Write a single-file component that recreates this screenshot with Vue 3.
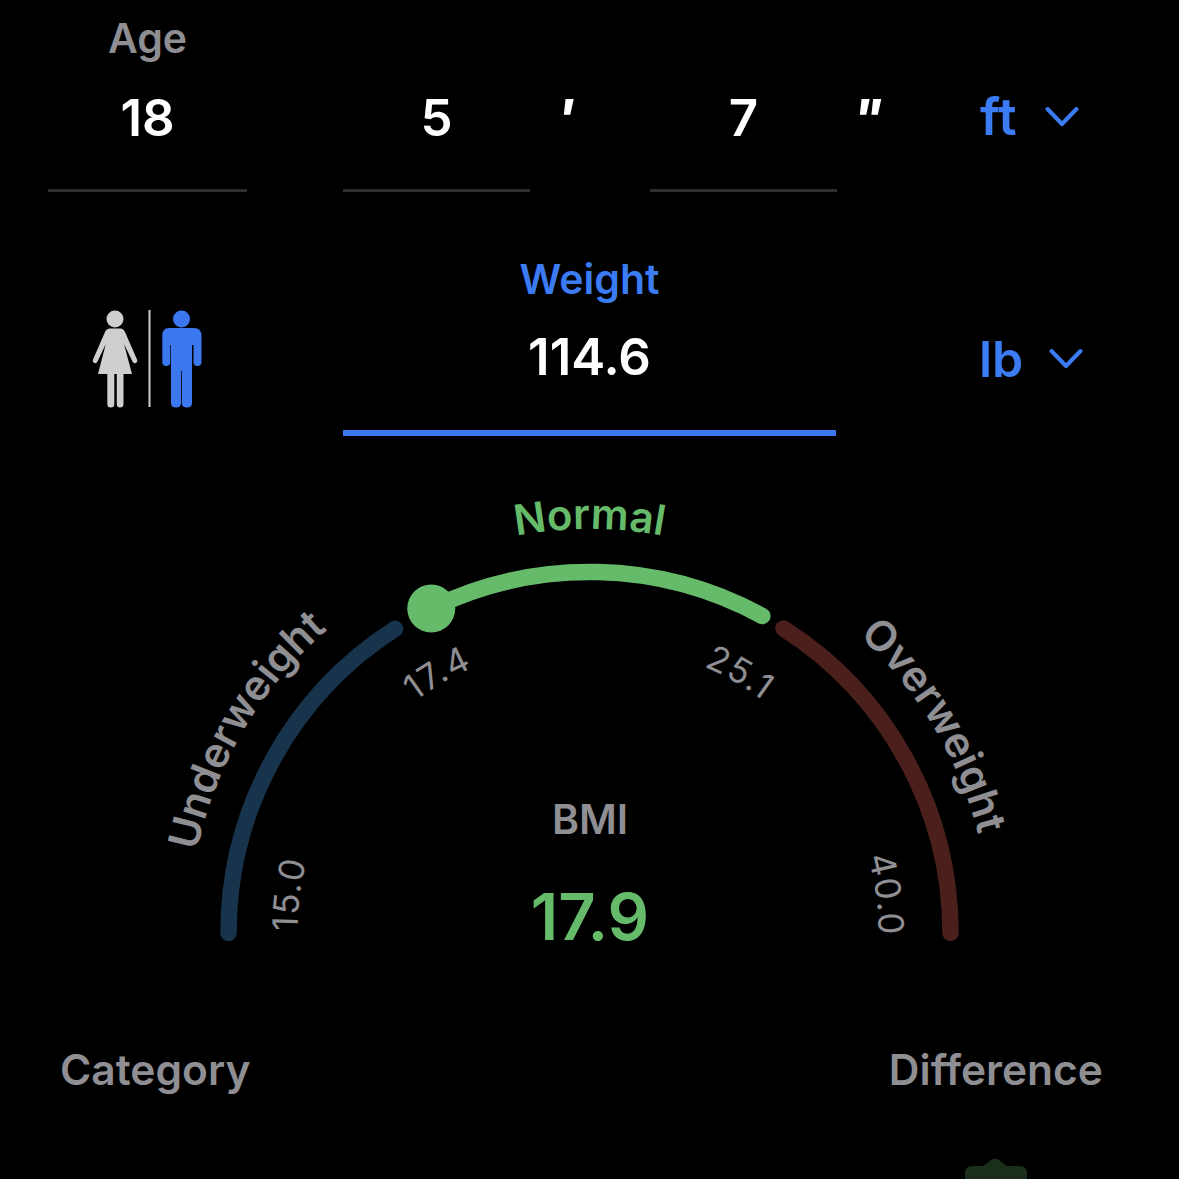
<template>
  <div class="screen">
    <div class="row row-height">
      <div class="field age">
        <span class="label">Age</span>
        <span class="value">18</span>
      </div>
      <div class="field feet">
        <span class="value">5</span>
      </div>
      <span class="mark prime">'</span>
      <div class="field inches">
        <span class="value">7</span>
      </div>
      <span class="mark double">"</span>
      <div class="unit">
        <span>ft</span>
        <svg width="34" height="22" viewBox="0 0 34 22"><path d="M2.5 3 17 18 31.500 3" fill="none" stroke="#3b7cf4" stroke-width="4" stroke-linecap="round" stroke-linejoin="round" /></svg>
      </div>
    </div>

    <div class="row row-weight">
      <div class="gender">
        <svg width="115" height="105" viewBox="90 305 115 105">
          <circle cx="115" cy="319" r="8.500" fill="#cfcfcf" />
          <path fill="#cfcfcf" d="M110 328.500H120.500Q123.500 328.500 125 332L137 359.500Q138 362 135.500 363Q133.500 363.800 132.500 361.500L124 344L132 374H123.500V404Q123.500 407.500 120 407.500Q116.800 407.500 116.800 404V374H114.300V404Q114.300 407.500 110.800 407.500Q107.300 407.500 107.300 404V374H98L105.800 344L97.500 361.500Q96.500 363.800 94.500 363Q92.200 362 93 359.500L105 332Q106.500 328.500 110 328.500Z" />
          <rect x="148.500" y="310" width="2" height="97" fill="#cfcfcf" />
          <circle cx="181.500" cy="319" r="8.500" fill="#3b78f0" />
          <path fill="#3b78f0" d="M169 328H194Q201.500 328 201.500 336V362Q201.500 366 197.500 366Q193.500 366 193.500 362V345H192V403Q192 407.500 187 407.500Q182 407.500 181.800 403V371H181V403Q181 407.500 176 407.500Q171 407.500 171 403V345H170.300V362Q170.300 366 166.300 366Q162.300 366 162.300 362V336Q162.300 328 169 328Z" />
        </svg>
      </div>
      <div class="field weight">
        <span class="label active">Weight</span>
        <span class="value">114.6</span>
      </div>
      <div class="unit unit-lb">
        <span>lb</span>
        <svg width="34" height="22" viewBox="0 0 34 22"><path d="M2.5 3 17 18 31.500 3" fill="none" stroke="#3b7cf4" stroke-width="4" stroke-linecap="round" stroke-linejoin="round" /></svg>
      </div>
    </div>

    <svg class="gauge" width="1179" height="520" viewBox="0 480 1179 520">
      <defs>
        <path v-for="t in pathsForText" :id="t.id" :key="t.id" :d="arc(t.r, t.from, t.to)" fill="none" />
      </defs>
      <path :d="arc(R, 180, 122.6)" class="band" stroke="#18344d" />
      <path :d="arc(R, 116, 61.4)" class="band" stroke="#66bb6a" />
      <path :d="arc(R, 57.5, 0)" class="band" stroke="#4a1f1c" />
      <circle :cx="point(R, 116).x" :cy="point(R, 116).y" r="24" fill="#66bb6a" />

      <text v-for="t in pathsForText" :key="t.text" :class="t.cls" text-anchor="middle">
        <textPath :href="'#' + t.id" startOffset="50%">{{ t.text }}</textPath>
      </text>

      <text x="590" y="834" text-anchor="middle" class="bmi-label">BMI</text>
      <text x="590" y="940" text-anchor="middle" class="bmi-value">17.9</text>
    </svg>

    <div class="row row-foot">
      <span class="foot-label">Category</span>
      <span class="foot-label">Difference</span>
    </div>
    <svg class="badge" width="62" height="22" viewBox="0 0 62 22">
      <path d="M0 22V16Q0 9 8 9H18L26 3Q30 0 34 3L42 9H54Q62 9 62 16V22Z" fill="#1a2e1a" />
    </svg>
  </div>
</template>

<script setup>
const R = 361
const CX = 589.5
const CY = 933

function point(r, deg) {
  const a = (deg * Math.PI) / 180
  return { x: CX + r * Math.cos(a), y: CY - r * Math.sin(a) }
}

// always drawn clockwise, from the larger angle to the smaller one
function arc(r, from, to) {
  const a = point(r, from)
  const b = point(r, to)
  return `M${a.x.toFixed(2)} ${a.y.toFixed(2)}A${r} ${r} 0 0 1 ${b.x.toFixed(2)} ${b.y.toFixed(2)}`
}

const pathsForText = [
  { id: 'under', text: 'Underweight', r: 401, from: 195.5, to: 103.5, cls: 'zone' },
  { id: 'normal', text: 'Normal', r: 404, from: 130, to: 50, cls: 'zone normal' },
  { id: 'over', text: 'Overweight', r: 401, from: 76.5, to: -14.5, cls: 'zone' },
  { id: 'n15', text: '15.0', r: 292, from: 192.6, to: 152.6, cls: 'tick' },
  { id: 'n174', text: '17.4', r: 290, from: 140.3, to: 100.3, cls: 'tick' },
  { id: 'n251', text: '25.1', r: 290, from: 80, to: 40, cls: 'tick' },
  { id: 'n40', text: '40.0', r: 289, from: 27.4, to: -12.6, cls: 'tick' }
]
</script>

<style>
html,
body {
  margin: 0;
  background: #000;
}
</style>

<style scoped>
.screen {
  position: relative;
  width: 1179px;
  height: 1179px;
  overflow: hidden;
  background: #000;
  font-family: Inter, "Liberation Sans", sans-serif;
  color: #fff;
}

.row {
  display: flex;
  align-items: flex-end;
  padding-left: 48px;
}

.row-height {
  height: 176px;
  padding-top: 16px;
}

.row-weight {
  height: 176px;
  margin-top: 68px;
}

.field {
  display: flex;
  flex-direction: column;
  align-items: center;
  height: 100%;
  justify-content: flex-end;
  border-bottom: 3px solid #2e2e30;
  box-sizing: border-box;
}

.age {
  width: 199px;
  margin-right: 96px;
}

.feet,
.inches {
  width: 187px;
}

.label {
  font-size: 41px;
  line-height: 46px;
  font-weight: 600;
  color: #8e8e93;
}

.label.active {
  color: #3b7cf4;
}

.value {
  font-size: 51px;
  line-height: 58px;
  font-weight: 600;
  margin-top: 28px;
  margin-bottom: 42px;
}

.mark {
  width: 120px;
  align-self: flex-start;
  font-size: 50px;
  font-weight: 800;
  font-style: italic;
  line-height: 58px;
  margin-top: 72px;
  box-sizing: border-box;
}

.prime {
  padding-left: 27px;
}

.mark.double {
  width: 143px;
  padding-left: 16px;
}

.unit {
  display: flex;
  align-items: center;
  gap: 28px;
  align-self: flex-start;
  margin-top: 72px;
  font-size: 52px;
  line-height: 58px;
  font-weight: 600;
  color: #3b7cf4;
}

.gender {
  width: 295px;
  height: 100%;
  margin-left: -7px;
  margin-right: 7px;
}

.gender svg {
  display: block;
  margin-top: 45px;
  margin-left: 49px;
}

.weight {
  width: 493px;
  border-bottom: 6px solid #3b78f0;
}

.weight .value {
  margin-top: 26px;
  margin-bottom: 44px;
}

.unit-lb {
  margin-left: 143px;
  margin-top: 70px;
  gap: 26px;
  font-size: 50px;
}

.gauge {
  display: block;
  margin-top: 44px;
}

.band {
  fill: none;
  stroke-width: 16.500;
  stroke-linecap: round;
}

.zone {
  font-size: 42px;
  font-weight: 600;
  fill: #8e8e93;
}

.zone.normal {
  fill: #66bb6a;
}

.tick {
  font-size: 35px;
  letter-spacing: 1.500px;
  font-weight: 400;
  fill: #8e8e93;
}

.bmi-label {
  font-size: 41px;
  font-weight: 600;
  fill: #8e8e93;
}

.bmi-value {
  font-size: 65px;
  font-weight: 600;
  fill: #66bb6a;
}

.row-foot {
  justify-content: space-between;
  padding: 0 76px 0 60px;
  margin-top: 46px;
}

.foot-label {
  font-size: 42.500px;
  line-height: 48px;
  font-weight: 600;
  color: #8e8e93;
}

.badge {
  position: absolute;
  left: 965px;
  bottom: 0;
  height: 22px;
}
</style>
